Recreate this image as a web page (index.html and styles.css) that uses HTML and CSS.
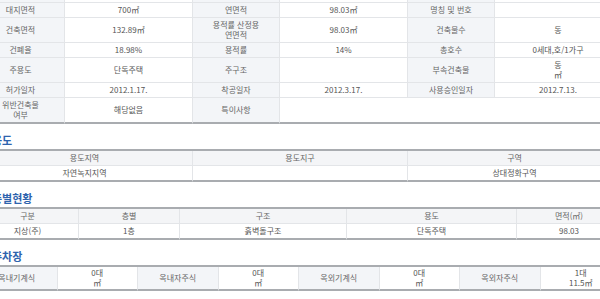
FILE: index.html
```html
<!DOCTYPE html>
<html lang="ko">
<head>
<meta charset="utf-8">
<title>건축물대장</title>
<link rel="stylesheet" href="styles.css">
</head>
<body>
<div class="page">
  <table class="grid info">
    <colgroup><col class="w88"><col class="w128"><col class="w87"><col class="w128"><col class="w87"><col class="w126"></colgroup>
    <tr><th>&nbsp;</th><td>&nbsp;</td><th>&nbsp;</th><td>&nbsp;</td><th>&nbsp;</th><td>&nbsp;</td></tr>
    <tr><th>대지면적</th><td>700㎡</td><th>연면적</th><td>98.03㎡</td><th>명칭 및 번호</th><td></td></tr>
    <tr><th>건축면적</th><td>132.89㎡</td><th>용적률 산정용<br>연면적</th><td>98.03㎡</td><th>건축물수</th><td>동</td></tr>
    <tr><th>건폐율</th><td>18.98%</td><th>용적률</th><td>14%</td><th>총호수</th><td>0세대,호/1가구</td></tr>
    <tr><th>주용도</th><td>단독주택</td><th>주구조</th><td></td><th>부속건축물</th><td>동<br>㎡</td></tr>
    <tr><th>허가일자</th><td>2012.1.17.</td><th>착공일자</th><td>2012.3.17.</td><th>사용승인일자</th><td>2012.7.13.</td></tr>
    <tr class="last"><th>위반건축물<br>여부</th><td>해당없음</td><th>특이사항</th><td colspan="3"></td></tr>
  </table>

  <h2 class="sec-title">용도</h2>
  <table class="grid list">
    <colgroup><col class="w216"><col class="w215"><col class="w213"></colgroup>
    <tr class="head"><th>용도지역</th><th>용도지구</th><th>구역</th></tr>
    <tr class="last"><td>자연녹지지역</td><td></td><td>상대정화구역</td></tr>
  </table>

  <h2 class="sec-title">층별현황</h2>
  <table class="grid list">
    <colgroup><col class="w102"><col class="w101"><col class="w167"><col class="w170"><col class="w104"></colgroup>
    <tr class="head"><th>구분</th><th>층별</th><th>구조</th><th>용도</th><th>면적(㎡)</th></tr>
    <tr class="last"><td>지상(주)</td><td>1층</td><td>흙벽돌구조</td><td>단독주택</td><td>98.03</td></tr>
  </table>

  <h2 class="sec-title">주차장</h2>
  <table class="grid info parking">
    <colgroup><col class="w80"><col class="w80"><col class="w80"><col class="w80"><col class="w80"><col class="w80"><col class="w80"><col class="w80"></colgroup>
    <tr class="last"><th>옥내기계식</th><td>0대<br>㎡</td><th>옥내자주식</th><td>0대<br>㎡</td><th>옥외기계식</th><td>0대<br>㎡</td><th>옥외자주식</th><td>1대<br>11.5㎡</td></tr>
  </table>
</div>
</body>
</html>
```

FILE: styles.css
```css
html, body {
  margin: 0;
  padding: 0;
  overflow: hidden;
  background: #fff;
}

body {
  font-family: "Noto Sans CJK KR", "Noto Sans", sans-serif;
  color: #555;
}

.page {
  width: 644px;
  margin: -14px 0 0 -23px;
}

.grid {
  width: 644px;
  table-layout: fixed;
  border-collapse: separate;
  border-spacing: 0;
  border-top: 2px solid #a9acb0;
}

.grid th,
.grid td {
  font-size: 8px;
  line-height: 10px;
  font-weight: normal;
  text-align: center;
  vertical-align: middle;
  padding: 2px 3px;
  border-bottom: 1px solid #e3e5e8;
  border-right: 1px solid #e3e5e8;
  white-space: nowrap;
  overflow: hidden;
}

.grid th:last-child,
.grid td:last-child {
  border-right: none;
}

.grid .last th,
.grid .last td {
  border-bottom: 2px solid #a9acb0;
}

.info th {
  background: #f3f5f8;
  color: #666;
}

.info td {
  background: #fff;
  color: #555;
}

.list .head th {
  background: #f4f5f7;
  color: #666;
}

.list td {
  color: #555;
}

.parking th,
.parking td {
  padding: 1px 3px;
}

.sec-title {
  margin: 0;
  padding: 9px 0 1px 15px;
  font-size: 11px;
  line-height: 15px;
  font-weight: bold;
  color: #2f64ae;
  white-space: nowrap;
}

.w80 { width: 80.5px; }
.w87 { width: 87px; }
.w88 { width: 88px; }
.w101 { width: 101px; }
.w102 { width: 102px; }
.w104 { width: 104px; }
.w126 { width: 126px; }
.w128 { width: 128px; }
.w167 { width: 167px; }
.w170 { width: 170px; }
.w213 { width: 213px; }
.w215 { width: 215px; }
.w216 { width: 216px; }
```
